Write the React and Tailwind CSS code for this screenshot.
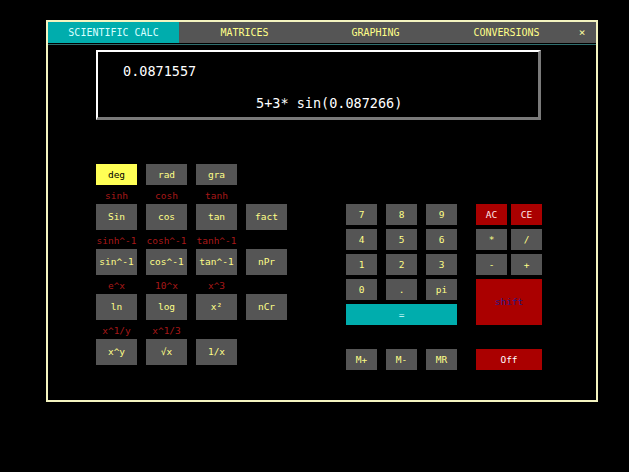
const tabs = ['SCIENTIFIC CALC', 'MATRICES', 'GRAPHING', 'CONVERSIONS'];

const funcRows = [
  { labels: ['sinh', 'cosh', 'tanh', ''], keys: ['Sin', 'cos', 'tan', 'fact'] },
  { labels: ['sinh^-1', 'cosh^-1', 'tanh^-1', ''], keys: ['sin^-1', 'cos^-1', 'tan^-1', 'nPr'] },
  { labels: ['e^x', '10^x', 'x^3', ''], keys: ['ln', 'log', 'x²', 'nCr'] },
  { labels: ['x^1/y', 'x^1/3', '', ''], keys: ['x^y', '√x', '1/x', ''] },
];

const numKeys = ['7', '8', '9', '4', '5', '6', '1', '2', '3', '0', '.', 'pi'];

function Key({ children, className = '' }) {
  return (
    <div className={`flex items-center justify-center bg-[#555555] text-[#ffff88] ${className}`}>
      {children}
    </div>
  );
}

export default function App() {
  return (
    <div
      className="w-[629px] h-[472px] bg-black pt-[20px] pl-[46px]"
      style={{ fontFamily: '"DejaVu Sans Mono", "Liberation Mono", monospace' }}
    >
      <div className="w-[552px] h-[382px] border-2 border-[#f4f4c0] flex flex-col">
        {/* tab strip */}
        <div className="flex h-[21px] bg-[#555555] text-[10px] leading-none">
          {tabs.map((t, i) => (
            <div
              key={t}
              className={`w-[131px] flex items-center justify-center ${
                i === 0 ? 'bg-[#00adad] text-[#d8ffff]' : 'text-[#ffff88]'
              }`}
            >
              {t}
            </div>
          ))}
          <div className="flex-1 flex items-center justify-center pr-[4px] text-[#ffffa0] text-[11px]">×</div>
        </div>
        <div className="h-px mt-px bg-[#2f6e6e]" />

        {/* display */}
        <div className="ml-[48px] mt-[5px] w-[445px] h-[70px] border-t-2 border-l-2 border-b-[3px] border-r-[3px] border-t-white border-l-white border-b-[#7a7a7a] border-r-[#7a7a7a] flex flex-col text-white text-[13.5px] leading-[16px] pt-[11px]">
          <div className="pl-[25px]">0.0871557</div>
          <div className="pl-[158px] mt-[16px]">5+3* sin(0.087266)</div>
        </div>

        {/* keypads */}
        <div className="flex items-start mt-[44px] ml-[48px] text-[9.5px] leading-none">
          {/* scientific functions */}
          <div className="flex flex-col w-[191px]">
            <div className="flex gap-[9px]">
              <div className="w-[41px] h-[21px] flex items-center justify-center bg-[#ffff55] text-black">deg</div>
              <Key className="w-[41px] h-[21px]">rad</Key>
              <Key className="w-[41px] h-[21px]">gra</Key>
            </div>
            {funcRows.map((row, r) => (
              <div key={r} className="flex flex-col">
                <div className="flex gap-[9px] h-[19px] items-end pb-[4px] text-[#a81818]">
                  {row.labels.map((l, i) => (
                    <div key={i} className="w-[41px] text-center whitespace-nowrap">{l}</div>
                  ))}
                </div>
                <div className="flex gap-[9px]">
                  {row.keys.map((k, i) =>
                    k ? (
                      <Key key={i} className="w-[41px] h-[26px]">{k}</Key>
                    ) : (
                      <div key={i} className="w-[41px] h-[26px]" />
                    )
                  )}
                </div>
              </div>
            ))}
          </div>

          {/* numeric pad */}
          <div className="flex flex-col ml-[59px] mt-[40px]">
            <div className="flex items-start gap-[19px]">
              <div className="grid grid-cols-[31px_31px_31px] gap-x-[9px] gap-y-[4px]">
                {numKeys.map((k) => (
                  <Key key={k} className="h-[21px]">{k}</Key>
                ))}
                <div className="col-span-3 h-[21px] flex items-center justify-center bg-[#00adad] text-[#d8ffff]">=</div>
              </div>
              <div className="grid grid-cols-[31px_31px] gap-[4px]">
                <div className="h-[21px] flex items-center justify-center bg-[#aa0000] text-[#ffe8e8]">AC</div>
                <div className="h-[21px] flex items-center justify-center bg-[#aa0000] text-[#ffe8e8]">CE</div>
                <Key className="h-[21px]">*</Key>
                <Key className="h-[21px]">/</Key>
                <Key className="h-[21px]">-</Key>
                <Key className="h-[21px]">+</Key>
                <div className="col-span-2 h-[46px] flex items-center justify-center bg-[#aa0000] text-[#2a1a8a]">shift</div>
              </div>
            </div>
            <div className="flex items-start gap-[9px] mt-[24px]">
              <Key className="w-[31px] h-[21px]">M+</Key>
              <Key className="w-[31px] h-[21px]">M-</Key>
              <Key className="w-[31px] h-[21px]">MR</Key>
              <div className="ml-[10px] w-[66px] h-[21px] flex items-center justify-center bg-[#aa0000] text-white">Off</div>
            </div>
          </div>
        </div>
      </div>
    </div>
  );
}
